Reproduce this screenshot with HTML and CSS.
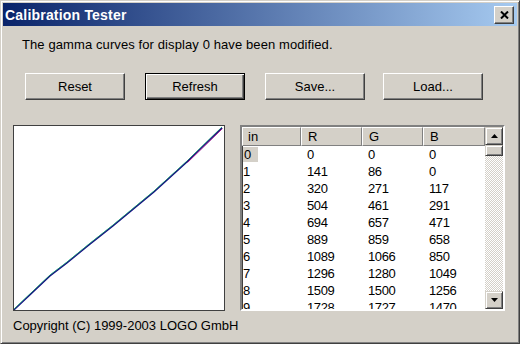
FILE: index.html
```html
<!DOCTYPE html>
<html>
<head>
<meta charset="utf-8">
<link rel="stylesheet" href="styles.css">
</head>
<body>
<div class="window">
  <div class="titlebar">
    <span class="title">Calibration Tester</span>
    <div class="close">
      <svg width="9" height="8" viewBox="0 0 9 8"><path d="M1 0.5 L8 7.5 M8 0.5 L1 7.5" stroke="#000" stroke-width="2" fill="none"/></svg>
    </div>
  </div>
  <div class="content">
    <p class="message">The gamma curves for display 0 have been modified.</p>
    <div class="buttons">
      <div class="btn">Reset</div>
      <div class="btn default">Refresh</div>
      <div class="btn">Save...</div>
      <div class="btn btn-load">Load...</div>
    </div>
    <div class="panels">
      <div class="graph">
        <svg width="210" height="184" viewBox="0 0 210 184">
          <polyline points="0,184 18,167 36,150 53,137 75,119 99,100 140,66 173,36 208,2" fill="none" stroke="#00b0b0" stroke-width="1" transform="translate(0,-1)"/>
          <polyline points="0,184 18,167 36,150 53,137 75,119 99,100 140,66 173,36 208,2" fill="none" stroke="#60c040" stroke-width="1" transform="translate(-0.5,-0.5)" opacity="0.6"/>
          <polyline points="0,184 18,167 36,150 53,137 75,119 99,100 140,66 173,36 208,2" fill="none" stroke="#101080" stroke-width="1.2"/>
          <polyline points="173,36 208,2" fill="none" stroke="#a02090" stroke-width="1" transform="translate(0.5,0.5)"/>
        </svg>
      </div>
      <div class="listview">
        <div class="table">
          <div class="header">
            <div class="hcell first">in</div>
            <div class="hcell">R</div>
            <div class="hcell">G</div>
            <div class="hcell">B</div>
          </div>
          <div class="rows">
            <div class="row"><span class="cell first"><span class="sel">0</span></span><span class="cell">0</span><span class="cell">0</span><span class="cell">0</span></div>
            <div class="row"><span class="cell first">1</span><span class="cell">141</span><span class="cell">86</span><span class="cell">0</span></div>
            <div class="row"><span class="cell first">2</span><span class="cell">320</span><span class="cell">271</span><span class="cell">117</span></div>
            <div class="row"><span class="cell first">3</span><span class="cell">504</span><span class="cell">461</span><span class="cell">291</span></div>
            <div class="row"><span class="cell first">4</span><span class="cell">694</span><span class="cell">657</span><span class="cell">471</span></div>
            <div class="row"><span class="cell first">5</span><span class="cell">889</span><span class="cell">859</span><span class="cell">658</span></div>
            <div class="row"><span class="cell first">6</span><span class="cell">1089</span><span class="cell">1066</span><span class="cell">850</span></div>
            <div class="row"><span class="cell first">7</span><span class="cell">1296</span><span class="cell">1280</span><span class="cell">1049</span></div>
            <div class="row"><span class="cell first">8</span><span class="cell">1509</span><span class="cell">1500</span><span class="cell">1256</span></div>
            <div class="row"><span class="cell first">9</span><span class="cell">1728</span><span class="cell">1727</span><span class="cell">1470</span></div>
          </div>
        </div>
        <div class="scrollbar">
          <div class="sbtn"><svg width="7" height="4" viewBox="0 0 7 4"><path d="M3.5 0 L7 4 L0 4 Z" fill="#000"/></svg></div>
          <div class="thumb"></div>
          <div class="track"></div>
          <div class="sbtn"><svg width="7" height="4" viewBox="0 0 7 4"><path d="M0 0 L7 0 L3.5 4 Z" fill="#000"/></svg></div>
        </div>
      </div>
    </div>
    <p class="copyright">Copyright (C) 1999-2003 LOGO GmbH</p>
  </div>
</div>
</body>
</html>
```

FILE: styles.css
```css
* { box-sizing: border-box; }
html, body { margin: 0; padding: 0; }
body {
  width: 520px;
  height: 344px;
  overflow: hidden;
  background: #d4d0c8;
  font-family: "Liberation Sans", Arial, sans-serif;
  font-size: 13px;
  color: #000;
}
.window {
  width: 520px;
  height: 344px;
  background: #d4d0c8;
  border: 1px solid;
  border-color: #d4d0c8 #404040 #404040 #d4d0c8;
  box-shadow: inset 1px 1px 0 #fff, inset -1px -1px 0 #808080;
  padding: 2px;
  display: flex;
  flex-direction: column;
}
.titlebar {
  height: 23px;
  flex: none;
  background: linear-gradient(to right, #0a246a, #a6caf0);
  display: flex;
  align-items: center;
  justify-content: space-between;
  padding: 0 3px 0 2px;
}
.title {
  color: #fff;
  font-weight: bold;
  font-size: 14px;
  line-height: 16px;
  margin-top: 1px;
  letter-spacing: 0.2px;
}
.close {
  width: 20px;
  height: 18px;
  background: #d4d0c8;
  border: 1px solid;
  border-color: #fff #404040 #404040 #fff;
  box-shadow: inset -1px -1px 0 #808080;
  display: flex;
  align-items: center;
  justify-content: center;
}
.content {
  padding: 0 10px;
  display: flex;
  flex-direction: column;
}
.message {
  margin: 11px 0 0 9px;
  line-height: 16px;
  letter-spacing: 0.1px;
}
.buttons {
  display: flex;
  gap: 20px;
  margin: 20px 0 0 12px;
}
.btn {
  width: 100px;
  height: 27px;
  background: #d4d0c8;
  border: 1px solid;
  border-color: #fff #404040 #404040 #fff;
  box-shadow: inset -1px -1px 0 #808080;
  display: flex;
  align-items: center;
  justify-content: center;
  line-height: 16px;
}
.btn.default {
  border: 1px solid #000;
  box-shadow: inset 1px 1px 0 #fff, inset -1px -1px 0 #404040, inset -2px -2px 0 #808080;
}
.btn-load { margin-left: -2px; }
.panels {
  display: flex;
  gap: 15px;
  margin-top: 25px;
  height: 186px;
}
.graph {
  width: 212px;
  height: 186px;
  background: #fff;
  border: 1px solid #404040;
}
.graph svg { display: block; }
.listview {
  width: 265px;
  height: 186px;
  background: #fff;
  border: 2px solid;
  border-color: #808080 #fff #fff #808080;
  box-shadow: inset 1px 1px 0 #404040;
  display: flex;
  overflow: hidden;
}
.table {
  flex: 1;
  overflow: hidden;
  font-size: 13px;
  letter-spacing: -0.4px;
  font-family: "Liberation Sans", Arial, sans-serif;
}
.header {
  display: grid;
  grid-template-columns: 59px 61px 61px 62px;
  height: 19px;
}
.hcell {
  background: #d4d0c8;
  border: 1px solid;
  border-color: #fff #808080 #808080 #fff;
  padding-left: 6px;
  line-height: 17px;
  letter-spacing: 0;
}
.hcell.first { padding-left: 5px; }
.row {
  display: grid;
  grid-template-columns: 59px 61px 61px 62px;
  height: 17px;
  line-height: 17px;
}
.cell { padding-left: 6px; }
.cell.first { padding-left: 1px; }
.sel {
  display: inline-block;
  background: #d4d0c8;
  padding: 0 7px 0 1px;
  line-height: 15px;
}
.scrollbar {
  width: 18px;
  flex: none;
  display: flex;
  flex-direction: column;
}
.sbtn {
  height: 18px;
  flex: none;
  background: #d4d0c8;
  border: 1px solid;
  border-color: #d4d0c8 #404040 #404040 #d4d0c8;
  box-shadow: inset 1px 1px 0 #fff, inset -1px -1px 0 #808080;
  display: flex;
  align-items: center;
  justify-content: center;
}
.thumb {
  height: 11px;
  flex: none;
  background: #d4d0c8;
  border: 1px solid;
  border-color: #d4d0c8 #404040 #404040 #d4d0c8;
  box-shadow: inset 1px 1px 0 #fff, inset -1px -1px 0 #808080;
}
.track {
  flex: 1;
  background: repeating-conic-gradient(#fff 0 25%, #d4d0c8 0 50%) 0 0 / 2px 2px;
}
.copyright {
  margin: 7px 0 0 0;
  line-height: 16px;
}
```
